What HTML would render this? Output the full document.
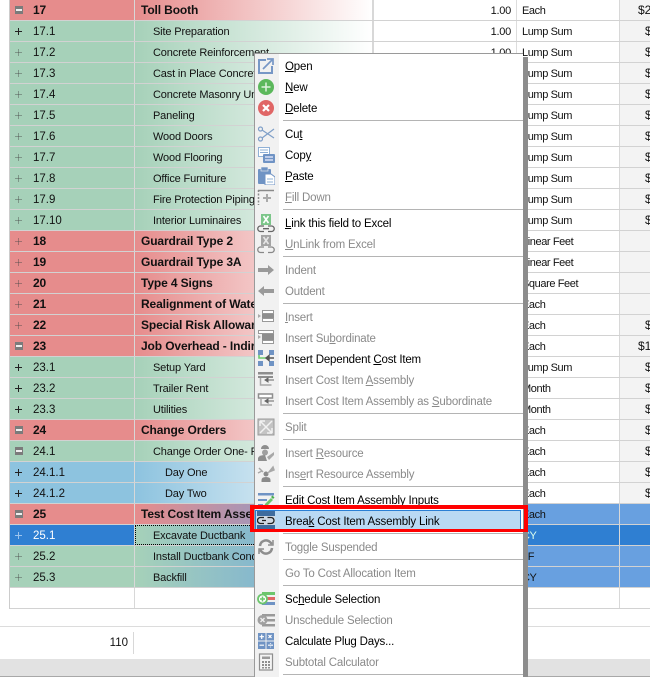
<!DOCTYPE html>
<html><head><meta charset="utf-8"><style>
html,body{margin:0;padding:0;background:#fff}
body{width:650px;height:677px;overflow:hidden;position:relative;font:11px/22px "Liberation Sans",sans-serif;color:#111}
#grid{position:absolute;left:9px;top:0;width:641px;border-left:1px solid #ccc}
.r{height:20px;border-bottom:1px solid #d2d2d2;position:relative;white-space:nowrap;overflow:hidden}
.r>span{position:absolute;top:0;height:20px;overflow:hidden}
.a{left:0;width:124px;border-right:1px solid #d8d8d8}
.b{left:125px;width:237px;border-right:2px solid #d8d8d8;letter-spacing:-.15px}
.c{left:364px;width:137px;text-align:right;padding-right:5px;border-right:1px solid #ddd;letter-spacing:-.25px}
.d{left:507px;width:97px;padding-left:5px;border-right:1px solid #d8d8d8;letter-spacing:-.4px}
.e{left:610px;width:30px;background:#f3f3f3;text-indent:18px;font-size:12px;line-height:20px}
.e.n{text-indent:25px}
.num{position:absolute;left:23px;font-size:11.5px}
.b em{font-style:normal;position:absolute;left:18px}
.b em.l3{left:30px}
.b em.l1{left:6px}
.h .num,.h .b em{font-weight:bold;font-size:12px;letter-spacing:-.12px;line-height:20px}
.pl,.mi{position:absolute;left:5px;top:6px;width:9px;height:9px}
.pl:before{content:"";position:absolute;left:0;top:4px;width:7px;height:1px;background:rgba(70,70,70,.42)}
.pl:after{content:"";position:absolute;left:3px;top:1px;width:1px;height:7px;background:rgba(70,70,70,.42)}
.pl.k:before,.pl.k:after{background:#222}
.mi{background:#7b7b7b;width:8px;height:8px;left:5px;top:6px}
.mi:before{content:"";position:absolute;left:1px;top:3px;width:6px;height:2px;background:#eee}
.h .a{background:#e68c8c}
.h .b{background:linear-gradient(90deg,#e68c8c,#fff)}
.g .a{background:#a6d1b9}
.g .b{background:linear-gradient(90deg,#a6d1b9,#fff)}
.u .a{background:#8dc3df}
.u .b{background:linear-gradient(90deg,#8dc3df,#fff)}
.hs .b{background:linear-gradient(90deg,#e68c8c,#68a0e0)}
.gs .b{background:linear-gradient(90deg,#a6d1b9,#68a0e0)}
.sel .d,.sel .e,.sel .c{background:#68a0e0}
.cur .a{background:#2f7fd2;color:#fff}
.cur .d,.cur .e,.cur .c{background:#2f7fd2;color:#dfe}
.cur .b{box-sizing:border-box;outline:1px dotted #000;outline-offset:-1px}
.cur .pl:before,.cur .pl:after{background:#9cc4ee}
#f1{position:absolute;left:0;top:626px;width:650px;height:1px;background:#dcdcdc}
#f2{position:absolute;left:0;top:659px;width:650px;height:17px;background:#e2e2e2;border-bottom:1px solid #a8a8a8}
#f3{position:absolute;left:100px;width:28px;top:633px;text-align:right;font-size:11.5px;line-height:20px}
#f4{position:absolute;left:133px;top:632px;width:1px;height:22px;background:#d8d8d8}
#sh{position:absolute;left:523px;top:57px;width:5px;height:620px;background:#8c8c8c}
#m{position:absolute;left:254px;top:53px;width:269px;height:624px;box-sizing:border-box;background:#fff;border:1px solid #9a9a9a;border-bottom:0;border-right:0;padding-top:2px;color:#000;letter-spacing:-.18px;font-size:11.5px}
#m:before{content:"";position:absolute;left:0;top:0;bottom:0;width:24px;background:#f1f1f1}
.i{height:21px;position:relative;white-space:nowrap;padding-left:30px;line-height:22px}
.i svg{position:absolute;left:2px;top:1px}
.x{color:#8a8a8a}
.s{height:5px;position:relative}
.s:after{content:"";position:absolute;left:28px;right:0;top:1px;height:1px;background:#b4b4b4}
u{text-underline-offset:1px}
#hl{position:absolute;left:255px;top:510px;width:266px;height:21px;background:#b9d9f3;box-sizing:border-box;border:1px solid #2a7fd4}
#rb{position:absolute;left:250px;top:505px;width:278px;height:27px;box-sizing:border-box;border:solid #f00;border-width:4px 4px 3px 4px}
#bk{position:absolute;left:285px;top:511px;line-height:22px;font-size:11.5px;letter-spacing:-.16px;color:#000;white-space:nowrap}
#bi{position:absolute;left:257px;top:511px}
</style></head><body>
<div id="grid">
<div class="r h"><span class="a"><i class="mi"></i><span class="num">17</span></span><span class="b"><em class="l1">Toll Booth</em></span><span class="c">1.00</span><span class="d">Each</span><span class="e">$2</span></div>
<div class="r g"><span class="a"><i class="pl k"></i><span class="num">17.1</span></span><span class="b"><em>Site Preparation</em></span><span class="c">1.00</span><span class="d">Lump Sum</span><span class="e n">$</span></div>
<div class="r g"><span class="a"><i class="pl"></i><span class="num">17.2</span></span><span class="b"><em>Concrete Reinforcement</em></span><span class="c">1.00</span><span class="d">Lump Sum</span><span class="e n">$</span></div>
<div class="r g"><span class="a"><i class="pl"></i><span class="num">17.3</span></span><span class="b"><em>Cast in Place Concrete</em></span><span class="c">1.00</span><span class="d">Lump Sum</span><span class="e n">$</span></div>
<div class="r g"><span class="a"><i class="pl"></i><span class="num">17.4</span></span><span class="b"><em>Concrete Masonry Units</em></span><span class="c">1.00</span><span class="d">Lump Sum</span><span class="e n">$</span></div>
<div class="r g"><span class="a"><i class="pl"></i><span class="num">17.5</span></span><span class="b"><em>Paneling</em></span><span class="c">1.00</span><span class="d">Lump Sum</span><span class="e n">$</span></div>
<div class="r g"><span class="a"><i class="pl"></i><span class="num">17.6</span></span><span class="b"><em>Wood Doors</em></span><span class="c">1.00</span><span class="d">Lump Sum</span><span class="e n">$</span></div>
<div class="r g"><span class="a"><i class="pl"></i><span class="num">17.7</span></span><span class="b"><em>Wood Flooring</em></span><span class="c">1.00</span><span class="d">Lump Sum</span><span class="e n">$</span></div>
<div class="r g"><span class="a"><i class="pl"></i><span class="num">17.8</span></span><span class="b"><em>Office Furniture</em></span><span class="c">1.00</span><span class="d">Lump Sum</span><span class="e n">$</span></div>
<div class="r g"><span class="a"><i class="pl"></i><span class="num">17.9</span></span><span class="b"><em>Fire Protection Piping</em></span><span class="c">1.00</span><span class="d">Lump Sum</span><span class="e n">$</span></div>
<div class="r g"><span class="a"><i class="pl"></i><span class="num">17.10</span></span><span class="b"><em>Interior Luminaires</em></span><span class="c">1.00</span><span class="d">Lump Sum</span><span class="e n">$</span></div>
<div class="r h"><span class="a"><i class="pl"></i><span class="num">18</span></span><span class="b"><em class="l1">Guardrail Type 2</em></span><span class="c">1.00</span><span class="d">Linear Feet</span><span class="e"></span></div>
<div class="r h"><span class="a"><i class="pl"></i><span class="num">19</span></span><span class="b"><em class="l1">Guardrail Type 3A</em></span><span class="c">1.00</span><span class="d">Linear Feet</span><span class="e"></span></div>
<div class="r h"><span class="a"><i class="pl"></i><span class="num">20</span></span><span class="b"><em class="l1">Type 4 Signs</em></span><span class="c">1.00</span><span class="d">Square Feet</span><span class="e"></span></div>
<div class="r h"><span class="a"><i class="pl"></i><span class="num">21</span></span><span class="b"><em class="l1">Realignment of Water</em></span><span class="c">1.00</span><span class="d">Each</span><span class="e"></span></div>
<div class="r h"><span class="a"><i class="pl"></i><span class="num">22</span></span><span class="b"><em class="l1">Special Risk Allowance</em></span><span class="c">1.00</span><span class="d">Each</span><span class="e n">$</span></div>
<div class="r h"><span class="a"><i class="mi"></i><span class="num">23</span></span><span class="b"><em class="l1">Job Overhead - Indirect</em></span><span class="c">1.00</span><span class="d">Each</span><span class="e">$1</span></div>
<div class="r g"><span class="a"><i class="pl k"></i><span class="num">23.1</span></span><span class="b"><em>Setup Yard</em></span><span class="c">1.00</span><span class="d">Lump Sum</span><span class="e n">$</span></div>
<div class="r g"><span class="a"><i class="pl k"></i><span class="num">23.2</span></span><span class="b"><em>Trailer Rent</em></span><span class="c">1.00</span><span class="d">Month</span><span class="e n">$</span></div>
<div class="r g"><span class="a"><i class="pl k"></i><span class="num">23.3</span></span><span class="b"><em>Utilities</em></span><span class="c">1.00</span><span class="d">Month</span><span class="e n">$</span></div>
<div class="r h"><span class="a"><i class="mi"></i><span class="num">24</span></span><span class="b"><em class="l1">Change Orders</em></span><span class="c">1.00</span><span class="d">Each</span><span class="e n">$</span></div>
<div class="r g"><span class="a"><i class="mi"></i><span class="num">24.1</span></span><span class="b"><em>Change Order One- Paving</em></span><span class="c">1.00</span><span class="d">Each</span><span class="e n">$</span></div>
<div class="r u"><span class="a"><i class="pl k"></i><span class="num">24.1.1</span></span><span class="b"><em class="l3">Day One</em></span><span class="c">1.00</span><span class="d">Each</span><span class="e n">$</span></div>
<div class="r u"><span class="a"><i class="pl k"></i><span class="num">24.1.2</span></span><span class="b"><em class="l3">Day Two</em></span><span class="c">1.00</span><span class="d">Each</span><span class="e n">$</span></div>
<div class="r h hs sel"><span class="a"><i class="mi"></i><span class="num">25</span></span><span class="b"><em class="l1">Test Cost Item Assembly</em></span><span class="c"></span><span class="d">Each</span><span class="e"></span></div>
<div class="r g gs cur"><span class="a"><i class="pl"></i><span class="num">25.1</span></span><span class="b"><em>Excavate Ductbank</em></span><span class="c"></span><span class="d">CY</span><span class="e"></span></div>
<div class="r g gs sel"><span class="a"><i class="pl"></i><span class="num">25.2</span></span><span class="b"><em>Install Ductbank Conduit</em></span><span class="c"></span><span class="d">LF</span><span class="e"></span></div>
<div class="r g gs sel"><span class="a"><i class="pl"></i><span class="num">25.3</span></span><span class="b"><em>Backfill</em></span><span class="c"></span><span class="d">CY</span><span class="e"></span></div>
<div class="r"><span class="a"></span><span class="b"></span><span class="c"></span><span class="d"></span><span class="e" style="background:#fff"></span></div>
</div>
<div id="f1"></div><div id="f3">110</div><div id="f4"></div><div id="f2"></div>
<div id="sh"></div>
<div id="m">
<div class="i"><svg width="18" height="18" fill="none" stroke="#7797c6" stroke-width="2"><path d="M9 3H2v13h13V9"/><path d="M6 12L15 3M10 2h6v6" stroke-width="1.7"/></svg><u>O</u>pen</div>
<div class="i"><svg width="18" height="18"><circle cx="9" cy="9" r="8" fill="#5cb85c"/><path d="M9 4.5v9M4.5 9h9" stroke="#dff2df" stroke-width="1.5"/></svg><u>N</u>ew</div>
<div class="i"><svg width="18" height="18"><circle cx="9" cy="9" r="8" fill="#e06666"/><path d="M6 6l6 6M12 6l-6 6" stroke="#fff" stroke-width="2.2"/></svg><u>D</u>elete</div>
<div class="s"></div>
<div class="i"><svg width="18" height="18" fill="none" stroke="#7f9fc8" stroke-width="1.2"><circle cx="3.5" cy="4" r="2"/><circle cx="3.5" cy="14" r="2"/><path d="M5 5l12 8M5 13L17 4"/></svg>Cu<u>t</u></div>
<div class="i"><svg width="18" height="18"><path d="M1.500 1.500h11v9h-11z" fill="#fff" stroke="#8fb0d6"/><path d="M3 4h8M3 6.500h8" stroke="#8fb0d6"/><rect x="6" y="8" width="12" height="9" rx="1" fill="#6f93c4"/><path d="M8 11h8M8 14h8" stroke="#eef" stroke-width="1.200"/></svg>Cop<u>y</u></div>
<div class="i"><svg width="18" height="18"><rect x="1" y="2" width="13" height="15" rx="1" fill="#6f93c4"/><rect x="4" y="0" width="7" height="4" fill="#6f93c4" stroke="#f1f1f1" stroke-width=".6"/><path d="M8 7h6l4 3v8H8z" fill="#fff" stroke="#6f93c4"/><path d="M10 12h6M10 15h6" stroke="#8fb0d6"/></svg><u>P</u>aste</div>
<div class="i x"><svg width="18" height="18"><path d="M1 2.500h16" stroke="#8a8a8a" stroke-width="1.500"/><path d="M1.500 2v15" stroke="#8a8a8a" stroke-width="1.500" stroke-dasharray="2 1.500"/><path d="M10 6v8M6 10h8" stroke="#aaa" stroke-width="2"/></svg><u>F</u>ill Down</div>
<div class="s"></div>
<div class="i"><svg width="18" height="19"><rect x="4" y="0" width="10" height="11" fill="#7cc68a"/><path d="M6.500 2l5 7M11.500 2l-5 7" stroke="#fff" stroke-width="1.600"/><path d="M7 12H3.500a2.700 2.700 0 0 0 0 5.500H7M11 12h3.500a2.700 2.700 0 0 1 0 5.500H11M6 14.700h6" fill="none" stroke="#666" stroke-width="1.300"/></svg><u>L</u>ink this field to Excel</div>
<div class="i x"><svg width="18" height="19"><rect x="4" y="0" width="10" height="11" fill="#a4a4a4"/><path d="M6.500 2l5 7M11.500 2l-5 7" stroke="#e6e6e6" stroke-width="1.600"/><path d="M7 12H3.500a2.700 2.700 0 0 0 0 5.500H7M11 12h3.500a2.700 2.700 0 0 1 0 5.500H11" fill="none" stroke="#888" stroke-width="1.300"/></svg><u>U</u>nLink from Excel</div>
<div class="s"></div>
<div class="i x"><svg width="18" height="18"><path d="M1 7h10V4l6 5-6 5v-3H1z" fill="#9a9a9a"/></svg>Indent</div>
<div class="i x"><svg width="18" height="18"><path d="M17 7H7V4L1 9l6 5v-3h10z" fill="#9a9a9a"/></svg>Outdent</div>
<div class="s"></div>
<div class="i x"><svg width="18" height="18"><path d="M5.500 2.500h11v3h-11zM5.500 10.500h11v3h-11z" fill="#fff" stroke="#999"/><rect x="5" y="6" width="12" height="4" fill="#8e8e8e"/><path d="M1 6l3 2-3 2z" fill="#aaa"/></svg><u>I</u>nsert</div>
<div class="i x"><svg width="18" height="18"><path d="M1.500 1.500h15v3h-15zM5.500 11.500h11v3h-11z" fill="#fff" stroke="#999"/><rect x="5" y="5" width="12" height="6" fill="#8e8e8e"/><path d="M1 6l3 2-3 2z" fill="#aaa"/></svg>Insert Su<u>b</u>ordinate</div>
<div class="i"><svg width="18" height="18"><path d="M1 0h5v5H1zM12 0h5v5h-5zM1 11h5v5H1zM12 11h5v5h-5z" fill="#6f93c4"/><path d="M2 5v3h10" fill="none" stroke="#6ccb6c" stroke-width="1.600"/><path d="M11 8h6M12 5.500l-3 2.500 3 2.500z" stroke="#555" fill="#555" stroke-width="1.400"/></svg>Insert Dependent <u>C</u>ost Item</div>
<div class="i x"><svg width="18" height="18"><path d="M1 1h15v2.500H1zM1 5h15v2H1z" fill="#8e8e8e"/><path d="M3.500 7v7h11" fill="none" stroke="#a8a8a8" stroke-width="1.500"/><path d="M9 9h8M11 7l-3 2 3 2z" stroke="#666" fill="#666"/></svg>Insert Cost Item <u>A</u>ssembly</div>
<div class="i x"><svg width="18" height="18"><path d="M1.500 2h14v4h-14z" fill="#fff" stroke="#8e8e8e" stroke-width="1.500"/><path d="M4 6v7h11" fill="none" stroke="#a8a8a8" stroke-width="1.500"/><path d="M9 9h8M11 7l-3 2 3 2z" stroke="#666" fill="#666"/></svg>Insert Cost Item Assembly as <u>S</u>ubordinate</div>
<div class="s"></div>
<div class="i x"><svg width="18" height="18"><path d="M1 1h16v16H1z" fill="#c4c4c4" stroke="#9a9a9a"/><path d="M3 3l12 12M15 3L3 15M3 3h5M3 3v5M15 15h-5M15 15v-5" stroke="#f2f2f2" stroke-width="1.500" fill="none"/></svg>Split</div>
<div class="s"></div>
<div class="i x"><svg width="18" height="18"><path d="M4 5a4 4 0 0 1 8 0z" fill="#8e8e8e"/><circle cx="8" cy="8.500" r="3" fill="#a0a0a0"/><path d="M1 17v-3q1-3 7-3l2 6z" fill="#8e8e8e"/><path d="M10 13l7-5v3l-5 5z" fill="#a8a8a8"/></svg>Insert <u>R</u>esource</div>
<div class="i x"><svg width="18" height="18"><circle cx="9" cy="9" r="2.500" fill="#8a8a8a"/><path d="M4.500 17v-2q0-3 4.500-3t4.500 3v2z" fill="#8a8a8a"/><path d="M2 3l4 4M1 8l4-2M12 7l4-5 1 3z" stroke="#a8a8a8" stroke-width="1.500" fill="#a8a8a8"/></svg>Ins<u>e</u>rt Resource Assembly</div>
<div class="s"></div>
<div class="i"><svg width="18" height="18"><path d="M1 2h16v2.500H1z" fill="#6f93c4"/><path d="M1 8h9v2H1zM1 13h5v2H1z" fill="#6f93c4"/><path d="M7 16l1-3 6-6 2 2-6 6z" fill="#6cc56c"/><path d="M14 6l1.500-1.500 2 2L16 8z" fill="#4caf50"/></svg>Edit Cost Item Assembly Inputs</div>
<div style="height:21px"></div>
<div class="s"></div>
<div class="i x"><svg width="18" height="18" fill="none" stroke="#8e8e8e" stroke-width="2.500"><path d="M3 8a6 6 0 0 1 10-4l2 2"/><path d="M15 10a6 6 0 0 1-10 4l-2-2"/><path d="M11 7h5V2" stroke-width="1.500"/><path d="M7 11H2v5" stroke-width="1.500"/></svg>Toggle Suspended</div>
<div class="s"></div>
<div class="i x">Go To Cost Allocation Item</div>
<div class="s"></div>
<div class="i"><svg width="18" height="18"><path d="M5 2h13v3H5z" fill="#6cc56c"/><path d="M9 7h9v3H9z" fill="#e06666"/><path d="M5 12h13v3H5z" fill="#6f93c4"/><circle cx="5.500" cy="9" r="4.500" fill="#fff" stroke="#6cc56c" stroke-width="1.800"/><path d="M5.500 6.500v5M3 9h5" stroke="#6cc56c" stroke-width="1.500"/></svg>Sc<u>h</u>edule Selection</div>
<div class="i x"><svg width="18" height="18"><path d="M5 3h13v2.500H5zM9 8h9v2.500H9zM5 13h13v2.500H5z" fill="#9a9a9a"/><circle cx="5.500" cy="9" r="5" fill="#a0a0a0"/><path d="M3.500 7l4 4M7.500 7l-4 4" stroke="#eee" stroke-width="1.300"/></svg>Unschedule Selection</div>
<div class="i"><svg width="18" height="18"><path d="M1 1h7.500v7.500H1zM9.500 1H17v7.500H9.500zM1 9.500h7.500V17H1zM9.500 9.500H17V17H9.500z" fill="#6f93c4"/><path d="M4.700 2.500v4.500M2.500 4.700h4.500M2.500 13.200h4.500M11.500 3l3 3M14.500 3l-3 3M11 13.200h5" stroke="#fff" stroke-width="1.200"/><path d="M13.500 11v.8M13.500 14.600v.8" stroke="#fff" stroke-width="1.200"/></svg>Calculate Plug Days...</div>
<div class="i x"><svg width="18" height="18"><rect x="2.500" y="1" width="13" height="16" fill="#f4f4f4" stroke="#8e8e8e" stroke-width="1.200"/><path d="M5 3.500h8v2.500H5z" fill="#9a9a9a"/><path d="M5 8h2v2H5zM8 8h2v2H8zM11 8h2v2h-2zM5 11h2v2H5zM8 11h2v2H8zM11 11h2v2h-2zM5 14h2v1.500H5zM8 14h2v1.500H8zM11 14h2v1.500h-2z" fill="#8e8e8e"/></svg>Subtotal Calculator</div>
<div class="s"></div>
</div>
<div id="hl"></div>
<svg id="bi" width="18" height="19"><rect x="0" y="0" width="18" height="5" fill="#3f6c9e"/><rect x="0" y="14" width="18" height="5" fill="#3f6c9e"/><rect x="0" y="5" width="18" height="9" fill="#cfd8e2"/><path d="M7 6.500H3.500a3 3 0 0 0 0 6H7M10.500 6.500H14a3 3 0 0 1 0 6h-3.500M5 9.500h4" fill="none" stroke="#222" stroke-width="1.300"/></svg>
<div id="bk">Brea<u>k</u> Cost Item Assembly Link</div>
<div id="rb"></div>
</body></html>
